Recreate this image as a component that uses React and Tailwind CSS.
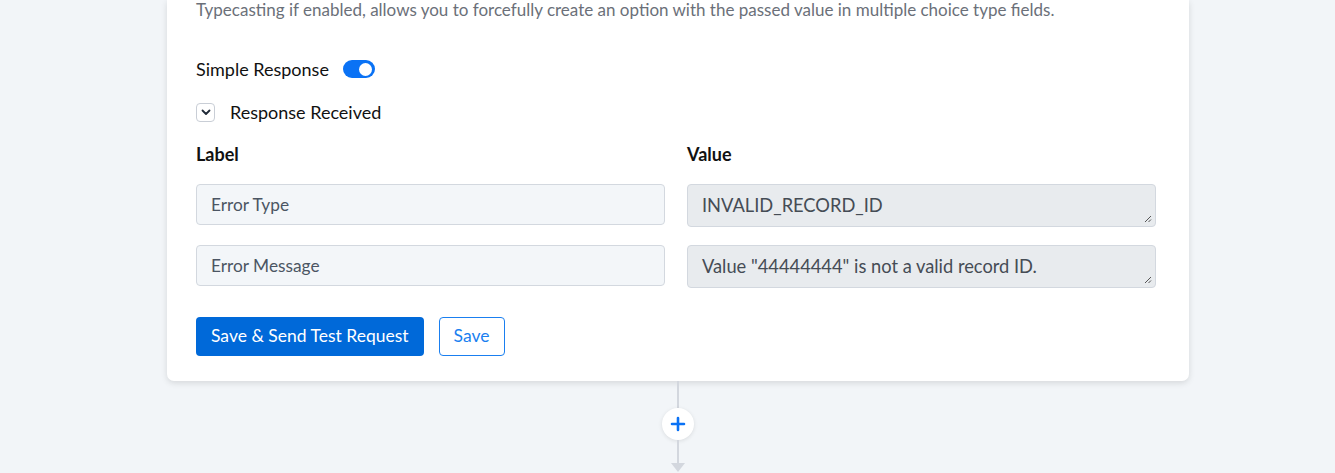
const ChevronBox = () => (
  <div className="w-[19px] h-[19px] border border-[#c9ced6] rounded-[4px] flex items-center justify-center">
    <svg width="10" height="7" viewBox="0 0 10 7" fill="none">
      <path d="M1.5 1.5L5 5L8.5 1.5" stroke="#1f2937" strokeWidth="1.8" strokeLinecap="round" strokeLinejoin="round" />
    </svg>
  </div>
);

const Grip = () => (
  <svg className="absolute right-[3px] bottom-[3px]" width="8" height="8" viewBox="0 0 8 8">
    <path d="M7 1L1 7M7 4.5L4.5 7" stroke="#555" strokeWidth="1" />
  </svg>
);

const Row = ({ label, value }) => (
  <div className="flex items-start gap-[22px]">
    <div className="flex-1 h-[41px] bg-[#f3f6f9] border border-[#d3d8df] rounded-[4px] px-[14px] flex items-center text-[17.3px] text-[#4b5563]">
      {label}
    </div>
    <div className="relative flex-1 h-[43px] bg-[#e8ebee] border border-[#d3d8df] rounded-[4px] px-[14px] flex items-center text-[18.3px] text-[#454c55]">
      {value}
      <Grip />
    </div>
  </div>
);

export default function App() {
  return (
    <div className="min-h-[473px] bg-[#f2f5f8] overflow-hidden" style={{ fontFamily: "Lato, 'Open Sans', sans-serif" }}>
      <div className="ml-[167px] w-[1022px] bg-white rounded-b-[7px] shadow-[0_2px_6px_rgba(0,0,0,0.12)] pl-[29px] pr-[33px] pb-[25px]">
        <p className="pt-[1px] text-[17px] leading-[18px] text-[#6b7079]">
          Typecasting if enabled, allows you to forcefully create an option with the passed value in multiple choice type fields.
        </p>

        <div className="mt-[40px] h-[20px] flex items-center gap-[14px]">
          <span className="text-[18px] text-[#111]">Simple Response</span>
          <div className="w-[32px] h-[18px] rounded-full bg-[#0a72f5] flex items-center justify-end pr-[3px]">
            <div className="w-[13px] h-[13px] rounded-full bg-white" />
          </div>
        </div>

        <div className="mt-[23px] h-[20px] flex items-center gap-[15px]">
          <ChevronBox />
          <span className="text-[18px] text-[#111]">Response Received</span>
        </div>

        <div className="mt-[22px] h-[20px] flex items-center gap-[22px] text-[18px] font-bold text-[#111]">
          <div className="flex-1">Label</div>
          <div className="flex-1">Value</div>
        </div>

        <div className="mt-[20px] flex flex-col gap-[18px]">
          <Row label="Error Type" value="INVALID_RECORD_ID" />
          <Row label="Error Message" value={'Value "44444444" is not a valid record ID.'} />
        </div>

        <div className="mt-[29px] flex items-center gap-[15px]">
          <button className="h-[39px] px-[15px] bg-[#0069d9] text-white text-[17.5px] rounded-[4px]">
            Save &amp; Send Test Request
          </button>
          <button className="h-[39px] px-[14px] border border-[#1a7ff0] text-[#1a7ff0] text-[17.5px] rounded-[4px] bg-white">
            Save
          </button>
        </div>
      </div>

      <div className="ml-[662px] w-[32px] flex flex-col items-center">
        <div className="w-[2px] h-[27px] bg-[#d3d7de]" />
        <div className="w-[32px] h-[32px] rounded-full bg-white shadow-[0_1px_4px_rgba(0,0,0,0.1)] flex items-center justify-center">
          <svg width="16" height="16" viewBox="0 0 16 16">
            <path d="M8 2V14M2 8H14" stroke="#0a72f5" strokeWidth="2.6" strokeLinecap="round" />
          </svg>
        </div>
        <div className="w-[2px] h-[23px] bg-[#d3d7de]" />
        <svg width="14" height="10" viewBox="0 0 14 10">
          <path d="M0 0H14L7 9Z" fill="#d3d7de" />
        </svg>
      </div>
    </div>
  );
}
